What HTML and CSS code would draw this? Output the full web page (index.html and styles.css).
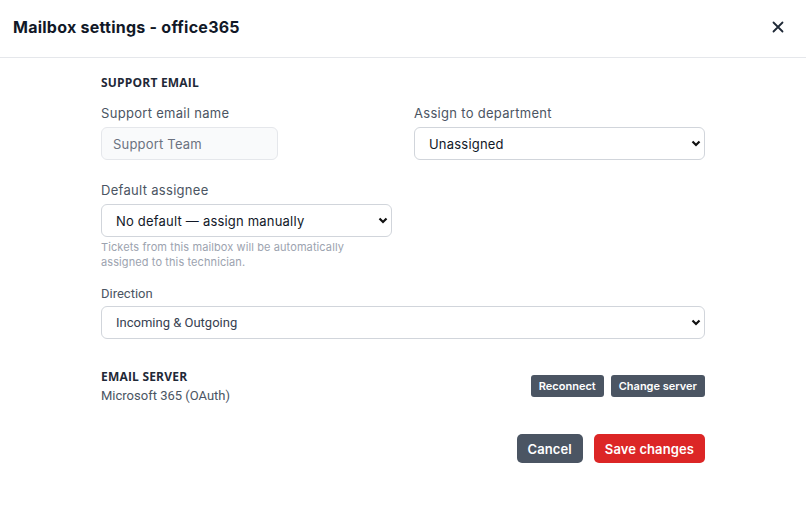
FILE: index.html
```html
<!DOCTYPE html>
<html>
<head>
<meta charset="utf-8">
<link rel="stylesheet" href="styles.css">
</head>
<body>
<div class="modal">
  <header class="modal-header">
    <h1 class="modal-title">Mailbox settings - office365</h1>
    <button class="close-btn" aria-label="Close">
      <svg width="14" height="14" viewBox="0 0 14 14"><path d="M2.5 2.5L11.5 11.5M11.5 2.5L2.5 11.5" stroke="#1f2937" stroke-width="1.8" stroke-linecap="round"/></svg>
    </button>
  </header>
  <main class="modal-body">
    <h2 class="section-title">SUPPORT EMAIL</h2>
    <div class="grid">
      <div class="field">
        <label class="label">Support email name</label>
        <input class="input" type="text" placeholder="Support Team">
      </div>
      <div class="field">
        <label class="label">Assign to department</label>
        <select class="select"><option>Unassigned</option></select>
      </div>
      <div class="field">
        <label class="label">Default assignee</label>
        <select class="select"><option>No default — assign manually</option></select>
        <p class="hint">Tickets from this mailbox will be automatically assigned to this technician.</p>
      </div>
    </div>
    <div class="field field-direction">
      <label class="label label-alt">Direction</label>
      <select class="select select-alt"><option>Incoming &amp; Outgoing</option></select>
    </div>
    <div class="server-row">
      <div class="server-info">
        <h2 class="section-title section-title-alt">EMAIL SERVER</h2>
        <div class="server-name">Microsoft 365 (OAuth)</div>
      </div>
      <div class="server-actions">
        <button class="btn-sm">Reconnect</button>
        <button class="btn-sm">Change server</button>
      </div>
    </div>
    <div class="footer">
      <button class="btn btn-gray">Cancel</button>
      <button class="btn btn-red">Save changes</button>
    </div>
  </main>
</div>
</body>
</html>
```

FILE: styles.css
```css
* { box-sizing: border-box; }
html, body { margin: 0; padding: 0; background: #fff; }
body { font-family: "Inter", "Noto Sans", sans-serif; color: #111827; width: 806px; height: 511px; overflow: hidden; }

.modal-header {
  height: 58px;
  border-bottom: 1px solid #e5e7eb;
  display: flex;
  align-items: center;
  justify-content: space-between;
  padding: 0 21px 4px 13px;
}
.modal-title { margin: 0; font-size: 16px; font-weight: 700; color: #111827; letter-spacing: 0.25px; }
.close-btn { border: 0; background: none; padding: 0; display: flex; cursor: pointer; }

.modal-body { padding: 16px 101px 0 101px; }

.section-title { margin: 0; font-size: 12px; font-weight: 700; color: #1f2937; font-family: "Open Sans", sans-serif; letter-spacing: 0.2px; }

.grid {
  display: grid;
  grid-template-columns: 1fr 1fr;
  column-gap: 22px;
  row-gap: 21px;
  margin-top: 13px;
}
.field { display: flex; flex-direction: column; align-items: flex-start; }
.label { font-size: 13px; color: #4b5563; margin-bottom: 5px; line-height: 18px; letter-spacing: 0.3px; }
.input {
  width: 177px; height: 33px;
  border: 1px solid #e5e7eb; border-radius: 6px;
  background: #f9fafb;
  padding: 0 11px;
  font-family: inherit; font-size: 13px; color: #6b7280; letter-spacing: 0.2px;
  outline: none;
}
.input::placeholder { color: #6b7280; }
.select {
  width: 100%; height: 33px;
  border: 1px solid #d1d5db; border-radius: 6px;
  background: #fff url("data:image/svg+xml;utf8,<svg xmlns='http://www.w3.org/2000/svg' width='10' height='7' viewBox='0 0 10 7'><path d='M1.5 1.5L5 5L8.5 1.5' fill='none' stroke='%23111' stroke-width='2.2'/></svg>") no-repeat right 3px center;
  -webkit-appearance: none; appearance: none;
  padding: 0 14px;
  font-family: inherit; font-size: 13px; color: #111827; letter-spacing: 0.2px;
}
.hint { margin: 3px 0 0; font-size: 11px; line-height: 15px; color: #9ca3af; max-width: 262px; letter-spacing: 0.1px; }

.field-direction { margin-top: 15px; }
.label-alt, .select-alt { font-family: "Roboto", sans-serif; letter-spacing: 0; }
.label-alt { font-size: 13px; margin-bottom: 3px; }
.select-alt { color: #374151; }

.server-row { display: flex; justify-content: space-between; align-items: center; margin-top: 30px; }
.section-title-alt { font-size: 12px; line-height: 16px; }
.server-name { font-family: "Roboto", sans-serif; font-size: 13px; color: #4b5563; margin-top: 3px; }
.server-actions { display: flex; gap: 7px; }
.btn-sm {
  height: 22px; border: 0; border-radius: 3px;
  background: #4b5563; color: #fff;
  font-family: inherit; font-size: 11px; font-weight: 600;
  padding: 0 8px;
}

.footer { display: flex; justify-content: flex-end; gap: 11px; margin-top: 31px; }
.btn {
  height: 29px; border: 0; border-radius: 5px;
  color: #fff; font-family: inherit; font-size: 13px; font-weight: 600;
  padding: 0 11px; letter-spacing: 0.1px;
}
.btn-gray { background: #4b5563; }
.btn-red { background: #dc2626; }
```
